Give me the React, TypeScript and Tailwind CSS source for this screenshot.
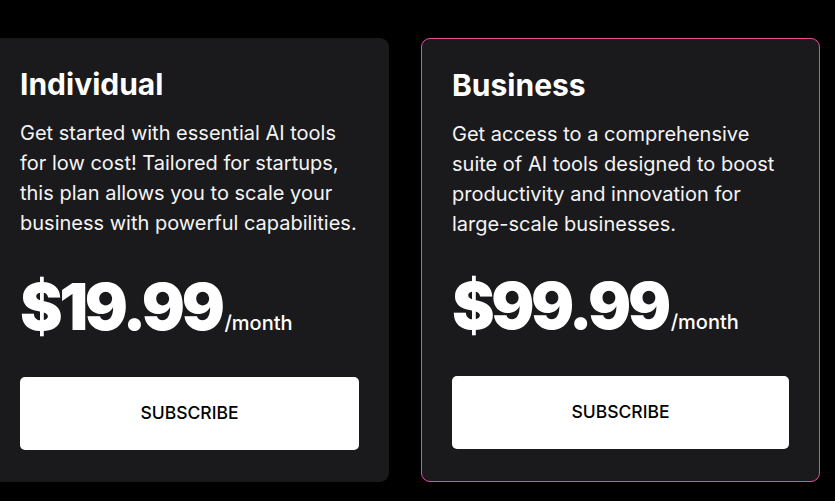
import React from 'react';

interface Plan {
  name: string;
  description: string;
  price: string;
  highlighted?: boolean;
}

const plans: Plan[] = [
  {
    name: 'Individual',
    description:
      'Get started with essential AI tools for low cost! Tailored for startups, this plan allows you to scale your business with powerful capabilities.',
    price: '$19.99',
  },
  {
    name: 'Business',
    description:
      'Get access to a comprehensive suite of AI tools designed to boost productivity and innovation for large-scale businesses.',
    price: '$99.99',
    highlighted: true,
  },
];

const PlanCard: React.FC<{ plan: Plan }> = ({ plan }) => (
  <div
    className={`w-[399px] h-[444px] shrink-0 rounded-[9px] bg-[#1a1a1c] px-[30px] pt-[28px] pb-[32px] flex flex-col ${
      plan.highlighted ? 'border border-[#ec4899] px-[29px] pt-[27px]' : ''
    }`}
  >
    <h3 className="text-[30px] leading-[36px] font-bold text-white">{plan.name}</h3>
    <p className="mt-[16px] text-[20px] leading-[30px] text-[#f4f4f5]">{plan.description}</p>
    <div className="mt-auto flex items-baseline">
      <span className="text-[64px] leading-[72px] font-black text-white tracking-[-3.4px]">{plan.price}</span>
      <span className="ml-[3px] text-[20px] font-medium text-white">/month</span>
    </div>
    <button className="mt-[34px] h-[73px] w-full rounded-[5px] bg-white text-[17.5px] font-medium text-black">
      SUBSCRIBE
    </button>
  </div>
);

export default function App() {
  return (
    <div
      className="w-[835px] h-[501px] bg-black overflow-hidden"
      style={{ fontFamily: 'Inter, "Noto Sans", sans-serif' }}
    >
      <div className="flex gap-[32px] ml-[-10px] pt-[38px]">
        {plans.map(p => (
          <PlanCard key={p.name} plan={p} />
        ))}
      </div>
    </div>
  );
}
